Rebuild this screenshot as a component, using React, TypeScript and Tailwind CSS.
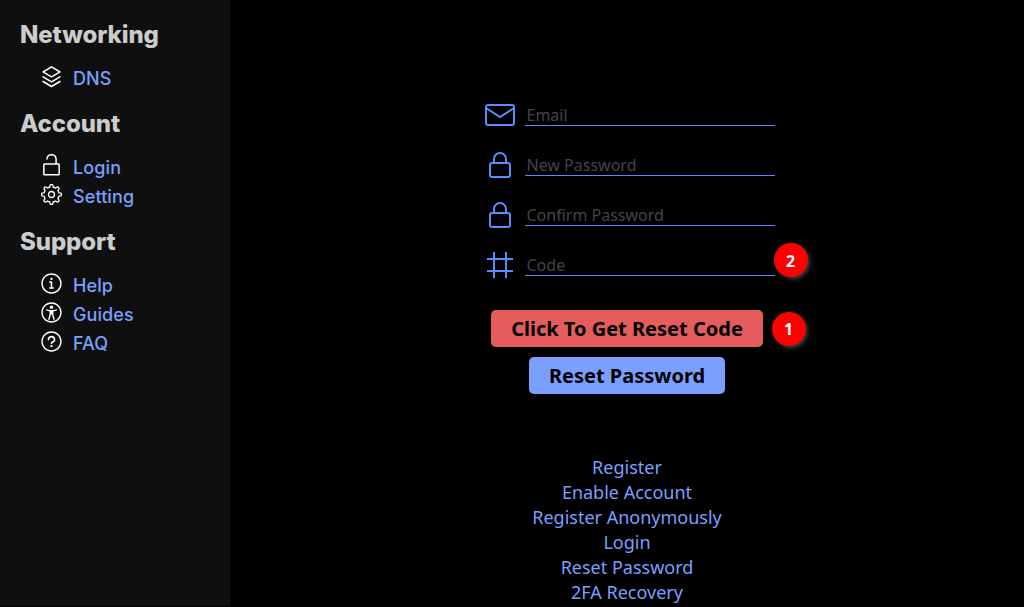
import type { ReactNode } from "react";
import {
  RxLayers,
  RxLockOpen1,
  RxGear,
  RxInfoCircled,
  RxAccessibility,
  RxQuestionMarkCircled,
} from "react-icons/rx";
import type { IconType } from "react-icons";

const sections: { title: string; items: { label: string; Icon: IconType }[] }[] = [
  { title: "Networking", items: [{ label: "DNS", Icon: RxLayers }] },
  {
    title: "Account",
    items: [
      { label: "Login", Icon: RxLockOpen1 },
      { label: "Setting", Icon: RxGear },
    ],
  },
  {
    title: "Support",
    items: [
      { label: "Help", Icon: RxInfoCircled },
      { label: "Guides", Icon: RxAccessibility },
      { label: "FAQ", Icon: RxQuestionMarkCircled },
    ],
  },
];

const envelope = "M.5 4l7 4.5 7-4.5M1.5 2.5h12a1 1 0 011 1v8a1 1 0 01-1 1h-12a1 1 0 01-1-1v-8a1 1 0 011-1z";
const lock = "M4.5 6.5v-2a3 3 0 016 0v2m-7 0h8a1 1 0 011 1v5a1 1 0 01-1 1h-8a1 1 0 01-1-1v-5a1 1 0 011-1z";
const hash = "M4.5 1v13m6-13v13M1 4.5h13m-13 6h13";

const links = ["Register", "Enable Account", "Register Anonymously", "Login", "Reset Password", "2FA Recovery"];

function Field({ path, label, children }: { path: string; label: string; children?: ReactNode }) {
  return (
    <div className="relative flex h-[30px] w-[290px] gap-[10px]">
      <svg viewBox="0 0 15 15" className="size-[30px] shrink-0" fill="none" stroke="#5b8cff">
        <path d={path} />
      </svg>
      <input
        placeholder={label}
        className="h-[26px] w-[250px] border-b border-[#5b8cff] bg-transparent px-[1.5px] pt-[4px] text-base leading-[22px] text-white outline-none placeholder:text-[#444444]"
      />
      {children}
    </div>
  );
}

function Badge({ n, place }: { n: number; place: string }) {
  return (
    <span
      className={`absolute flex size-[34px] items-center justify-center rounded-full bg-[#ff0000] text-base font-bold text-white shadow-[2px_2px_4px_rgba(255,255,255,0.25)] ${place}`}
    >
      {n}
    </span>
  );
}

export default function App() {
  return (
    <div className="flex h-[607px] overflow-hidden bg-black">
      <nav className="h-[606px] w-[230px] shrink-0 bg-[#0f0f0f] px-5 pt-5 font-['Inter',sans-serif]">
        {sections.map(({ title, items }) => (
          <section key={title} className="mb-[15px]">
            <h2 className="mb-[15px] text-2xl leading-[30px] font-extrabold tracking-[-0.1px] text-[#cccccc]">{title}</h2>
            <ul className="pl-5">
              {items.map(({ label, Icon }) => (
                <li key={label} className="flex h-[29px] gap-[10px]">
                  <Icon className="size-[23px] shrink-0 text-white" />
                  <a className="pt-px text-lg leading-[26px] font-medium tracking-[0.1px] text-[#7a9fff]">{label}</a>
                </li>
              ))}
            </ul>
          </section>
        ))}
      </nav>
      <main className="flex flex-1 flex-col items-center pt-[100px] font-['Noto_Sans',sans-serif]">
        <form className="flex flex-col items-center">
          <div className="ml-[6px] flex flex-col gap-5">
            <Field path={envelope} label="Email" />
            <Field path={lock} label="New Password" />
            <Field path={lock} label="Confirm Password" />
            <Field path={hash} label="Code">
              <Badge n={2} place="-top-[7px] left-[288.5px] pt-px" />
            </Field>
          </div>
          <div className="relative mt-[30px]">
            <button type="button" className="block h-[37px] rounded-[5px] bg-[#e45c5c] px-5 text-xl font-bold text-black">
              Click To Get Reset Code
            </button>
            <Badge n={1} place="top-[2.25px] left-[280.5px]" />
          </div>
          <button type="button" className="mt-[10px] h-[37px] rounded-[5px] bg-[#7a9fff] px-5 text-xl font-bold text-black">
            Reset Password
          </button>
        </form>
        <div className="mt-[61px] flex flex-col items-center text-lg leading-[25px] text-[#7a9fff]">
          {links.map((link) => (
            <a key={link}>{link}</a>
          ))}
        </div>
      </main>
    </div>
  );
}
